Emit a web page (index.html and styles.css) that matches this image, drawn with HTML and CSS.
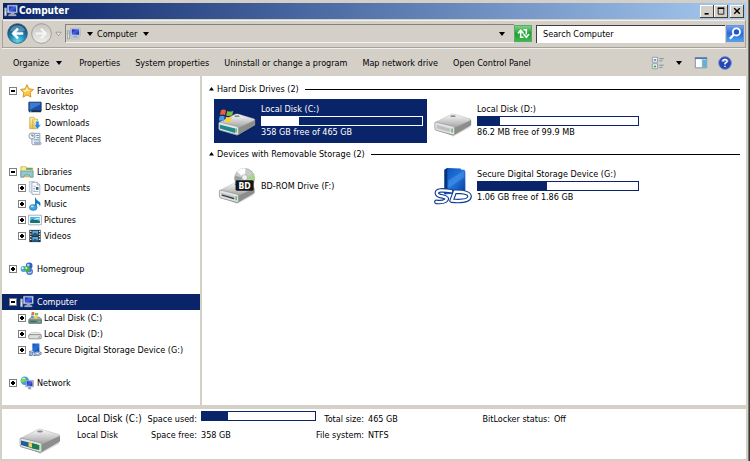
FILE: index.html
```html
<!DOCTYPE html>
<html lang="en">
<head>
<meta charset="utf-8">
<title>Computer</title>
<link rel="stylesheet" href="styles.css">
</head>
<body>
<svg class="defs" aria-hidden="true">
  <defs>
    <linearGradient id="g-metal" x1="0" y1="0" x2="0" y2="1"><stop offset="0" stop-color="#fafafa"/><stop offset="1" stop-color="#a2a4a2"/></linearGradient>
    <linearGradient id="g-screen" x1="0" y1="0" x2="1" y2="1"><stop offset="0" stop-color="#0c18b0"/><stop offset=".5" stop-color="#4464e8"/><stop offset="1" stop-color="#0a1890"/></linearGradient>
    <linearGradient id="g-blue" x1="0" y1="0" x2="1" y2="1"><stop offset="0" stop-color="#0a4fb4"/><stop offset=".5" stop-color="#2474dc"/><stop offset="1" stop-color="#063a96"/></linearGradient>
    <radialGradient id="g-back" cx=".5" cy=".9" r=".9"><stop offset="0" stop-color="#5fdcf4"/><stop offset=".5" stop-color="#1c7fae"/><stop offset="1" stop-color="#0c3f6c"/></radialGradient>
    <linearGradient id="g-fwd" x1="0" y1="0" x2="0" y2="1"><stop offset="0" stop-color="#c6c5c2"/><stop offset="1" stop-color="#eeeeec"/></linearGradient>
    <linearGradient id="g-folder" x1="0" y1="0" x2="0" y2="1"><stop offset="0" stop-color="#fdf3b0"/><stop offset="1" stop-color="#e8c24c"/></linearGradient>
    <symbol id="i-computer" viewBox="0 0 16 16">
      <path d="M.5 4.500h2.500v9H.5z" fill="#d9e2ee" stroke="#7f8da2" stroke-width=".8"/>
      <path d="M1.200 7h1" stroke="#56b85a"/>
      <path d="M4 1.500h11v8.500H4z" fill="#e9edf4" stroke="#98a4b8" stroke-width=".8"/>
      <path d="M5.300 2.600h8.600v6.200H5.300z" fill="url(#g-screen)"/>
      <path d="M8 10h3.500l.5 2H7z" fill="#9eaabe"/><path d="M5.500 12h8l.5 1.500H5z" fill="#dde3ed" stroke="#8c98ac" stroke-width=".5"/>
    </symbol>
    <symbol id="i-drive" viewBox="0 0 44 26">
      <path d="M3 14 22 25l19-12v3L22 26 4 17z" fill="#000" opacity=".12"/>
      <path d="M2 11 20 2q2-.8 4 0l17 5q1 .5 1 1.500v5L24 24q-1.500 1-3 .6L3 19q-1-.5-1-1.500z" fill="#8c8e8c"/>
      <path d="M2 10.500 20 1.500q2-.8 4 0l17 5q1 .8-.3 1.800L23.500 16z" fill="url(#g-metal)" stroke="#b8bab8" stroke-width=".5"/>
      <path d="M2 11q0-1 2-.8l18 4.500q1.700.5 1.700 2v6q0 1.800-2 1.300L3.500 19Q2 18.500 2 17z" fill="#e2e3e4" stroke="#85878a" stroke-width=".6"/>
      <path d="m4 13 15 4v4L4 17z" fill="#bcbfc4"/>
      <path d="M21 17v4.500" stroke="#42a832" stroke-width="1.300"/>
      <ellipse cx="22" cy="3.500" rx="3" ry="1" fill="#8a8c8a"/>
    </symbol>
    <symbol id="i-flag" viewBox="0 0 16 16">
      <path d="M2 2.500q3-1.500 5 .3L6 7.500q-2.200-1.500-5-.2z" fill="#f0602a"/>
      <path d="M8.200 3.200q2.500 1.500 6-.2l-1 4.600q-3 1.400-6 .2z" fill="#7cc040"/>
      <path d="M.8 8.500q2.700-1.200 5 .2L4.700 13.300Q2.500 12-.2 13z" fill="#4b9bea"/>
      <path d="M7 9q3 1.400 6 0l-1.200 4.600q-3 1.400-5.800.2z" fill="#fcd03a"/>
    </symbol>
    <symbol id="i-sd" viewBox="0 0 40 40">
      <path d="m11 3 3-2 14 .5 1 1.500h3l1 2V27l-22 2z" fill="url(#g-blue)"/>
      <path d="m11 3 3-2v26l-3 2z" fill="#06337e"/>
      <path d="m15 14 17-10v7L15 22z" fill="#6eb6ff" opacity=".3"/>
      <g fill="none" stroke-linecap="round" stroke-linejoin="round">
        <path d="M18 25.500Q3 23 3 27.300q0 2.700 6 3.700 7 1.500 3 4.500-3 2-9.500 1.200M22 26l-3.500 9.500Q37 37 37.500 31 37.500 26 22 26" stroke="#123f94" stroke-width="4.800"/>
        <path d="M18 25.500Q3 23 3 27.300q0 2.700 6 3.700 7 1.500 3 4.500-3 2-9.500 1.200M22 26l-3.500 9.500Q37 37 37.500 31 37.500 26 22 26" stroke="#fff" stroke-width="2.400"/>
      </g>
    </symbol>
    <symbol id="i-sdnav" viewBox="0 0 16 16">
      <path d="M5 .5h8V10.500L5 11z" fill="url(#g-blue)"/>
      <path d="M6.500 10Q1.500 9.300 2 11t3 1.300Q5.500 14 1 13.700M9 10.500l-1.500 3.300q6 .2 7-1.600T9 10.500" fill="none" stroke="#3c5c98" stroke-width="2"/>
      <path d="M6.500 10Q1.500 9.300 2 11t3 1.300Q5.500 14 1 13.700M9 10.500l-1.500 3.300q6 .2 7-1.600T9 10.500" fill="none" stroke="#e4ecf8" stroke-width=".9"/>
    </symbol>
  </defs>
</svg>

<div class="window">
  <header class="titlebar">
    <svg class="ico"><use href="#i-computer"/></svg>
    <h1 class="title">Computer</h1>
    <button class="winbtn" aria-label="Minimize"><svg viewBox="0 0 10 10"><path d="M2 8.500h5" stroke="#000" stroke-width="2"/></svg></button>
    <button class="winbtn" aria-label="Maximize"><svg viewBox="0 0 10 10"><path d="M1 1.500h8" stroke="#000" stroke-width="2"/><path d="M1.500 1v8h7V1" fill="none" stroke="#000"/></svg></button>
    <button class="winbtn close" aria-label="Close"><svg viewBox="0 0 10 10"><path d="m1.500 1.500 7 7m0-7-7 7" stroke="#000" stroke-width="1.800"/></svg></button>
  </header>

  <nav class="navbar">
    <button class="round" aria-label="Back"><svg viewBox="0 0 22 22"><circle cx="11" cy="11" r="10.300" fill="url(#g-back)" stroke="#35506a" stroke-width=".8"/><path d="M3 8a8.500 8.500 0 0 1 16 0q-8 3-16 0z" fill="#fff" opacity=".28"/><path d="M17 11H6.500m5-5-5 5 5 5" fill="none" stroke="#fff" stroke-width="2.600"/></svg></button>
    <button class="round" aria-label="Forward"><svg viewBox="0 0 22 22"><circle cx="11" cy="11" r="10.300" fill="url(#g-fwd)" stroke="#8f8e8a" stroke-width=".8"/><path d="M5 11h10.500m-5-5 5 5-5 5" fill="none" stroke="#f6f6f4" stroke-width="2.200"/></svg></button>
    <button class="recent" aria-label="Recent pages"><svg viewBox="0 0 8 6"><path d="M1 1h6L4 4.800z" fill="#f4f4f2" stroke="#85837c" stroke-width=".8"/></svg></button>
    <div class="address">
      <svg class="ico"><use href="#i-computer"/></svg>
      <button class="caret" aria-label="Root locations"><svg viewBox="0 0 6 4"><path d="M0 0h6L3 4z"/></svg></button>
      <a class="crumb" href="#computer">Computer</a>
      <button class="caret" aria-label="Computer locations"><svg viewBox="0 0 6 4"><path d="M0 0h6L3 4z"/></svg></button>
      <button class="caret history" aria-label="Previous locations"><svg viewBox="0 0 6 4"><path d="M0 0h6L3 4z"/></svg></button>
    </div>
    <button class="refresh" aria-label="Refresh"><svg viewBox="0 0 16 16"><path d="M8 12H5V6.500M2 8l3-3.500L8 8M8 4h3v5M8 8.500l3 3.500 3-3.500" fill="none" stroke="#fff" stroke-width="1.700"/></svg></button>
    <input class="search" type="text" value="Search Computer" aria-label="Search Computer">
    <button class="go" aria-label="Search"><svg viewBox="0 0 16 16"><circle cx="9" cy="6.300" r="3.800" fill="#2455c4" stroke="#fff" stroke-width="2"/><path d="m6 9.300-4 4.200" stroke="#fff" stroke-width="2.400"/></svg></button>
  </nav>

  <div class="toolbar">
    <button class="tool organize">Organize <svg class="drop" viewBox="0 0 6 4"><path d="M0 0h6L3 4z"/></svg></button>
    <button class="tool">Properties</button>
    <button class="tool">System properties</button>
    <button class="tool">Uninstall or change a program</button>
    <button class="tool">Map network drive</button>
    <button class="tool">Open Control Panel</button>
    <div class="views">
      <button class="tool" aria-label="Change view"><svg class="ico" viewBox="0 0 16 16"><path d="M1.500 1.500h6v5.500h-6zM1.500 9h6v5.500h-6z" fill="#fff" stroke="#8795a8"/><path d="M3 4.500h3" stroke="#3264b8" stroke-width="1.500"/><path d="M3 12h3" stroke="#3c9a3c" stroke-width="2"/><path d="M9.500 3h5M9.500 5.500h3.500M9.500 10.500h5M9.500 13h3.500" stroke="#7b8694"/></svg></button>
      <button class="tool" aria-label="More view options"><svg class="drop" viewBox="0 0 6 4"><path d="M0 0h6L3 4z"/></svg></button>
      <button class="tool pane" aria-label="Show the preview pane"><svg class="ico" viewBox="0 0 16 16"><path d="M1.500 2.500h13v11h-13z" fill="#fff" stroke="#6f86a6"/><path d="M1 2.500h14" stroke="#4478b8" stroke-width="2"/><path d="M10 4h4v9h-4z" fill="#58b4dc"/><path d="M9.500 3v10" stroke="#7e9cbc"/></svg></button>
      <button class="tool" aria-label="Get help"><svg class="ico" viewBox="0 0 16 16"><circle cx="8" cy="8" r="7.300" fill="#2446b4" stroke="#7f95cc"/><path d="M3 6a5.500 5.500 0 0 1 10 0q-5 2-10 0z" fill="#fff" opacity=".3"/><path d="M5.500 6.200Q5.700 4 8 4t2.500 2Q10.500 7.300 8 8.500v1.200M8 11v1.700" fill="none" stroke="#fff" stroke-width="1.700"/></svg></button>
    </div>
  </div>

  <div class="body">
    <aside class="tree">
      <ul class="group">
        <li class="node"><button class="toggle open" aria-label="Collapse Favorites"></button><svg class="ico" viewBox="0 0 16 16"><path d="m8 .8 2.200 4.700 5.200.7-3.800 3.600.9 5.200L8 12.500 3.500 15l.9-5.200L.6 6.200l5.200-.7z" fill="#fcc84a" stroke="#d68a1c"/><path d="m8 3 1.300 3.500 3 .4L5 9.500 3.500 7l3-.5z" fill="#fff0a8"/></svg><a href="#favorites">Favorites</a></li>
        <li class="node leaf"><svg class="ico" viewBox="0 0 16 16"><path d="M1 2.500h14v10H1z" fill="#1d4fa4" stroke="#0e2e6c"/><path d="M2 3h12v2L2 11z" fill="#3c7ccc"/><path d="M1 13h14" stroke="#182e50" stroke-width="2"/><path d="M2 12.800h2" stroke="#6cc2f2"/></svg><a href="#desktop">Desktop</a></li>
        <li class="node leaf"><svg class="ico" viewBox="0 0 16 16"><path d="M2 1.500h5v2h4v11H2z" fill="url(#g-folder)" stroke="#c79d34" stroke-width=".8"/><path d="M5.500 3.500v11" stroke="#cfa640"/><path d="M9 6h3.500v4h2.300L10.800 15 7 10h2z" fill="#2388dc" stroke="#e2f2ff" stroke-width=".6"/></svg><a href="#downloads">Downloads</a></li>
        <li class="node leaf"><svg class="ico" viewBox="0 0 16 16"><path d="M4.500 1.500h9V12q1.500 0 1.500 1t-1.500 1.500H6q-1.500 0-1.500-1.500z" fill="#edf4fb" stroke="#8292a8"/><path d="M7 11h7v3H7z" fill="#9db5ce"/><circle cx="4.500" cy="4.500" r="3.500" fill="#eef5fb" stroke="#8794a5"/><path d="M4.500 2.500v2h2" stroke="#31598e" fill="none"/><path d="M9.500 4h3M9.500 6.500h3M6.500 9h6" stroke="#5882b4"/></svg><a href="#recent">Recent Places</a></li>
      </ul>
      <ul class="group">
        <li class="node"><button class="toggle open" aria-label="Collapse Libraries"></button><svg class="ico" viewBox="0 0 16 16"><path d="M1 2h6l1 1.500h6.500v10H1z" fill="url(#g-folder)" stroke="#c29a38" stroke-width=".8"/><path d="M7 4.500h7" stroke="#59a86c" stroke-width="2"/><path d="M1 7h14v7h-3q-.3-3-4-3t-4 3H1z" fill="#8ec9d8" stroke="#4d96ab" stroke-width=".8"/></svg><a href="#libraries">Libraries</a></li>
        <li class="node sub"><button class="toggle" aria-label="Expand Documents"></button><svg class="ico" viewBox="0 0 16 16"><path d="M1.500.7h6v12h-6z" fill="#e7edf5" stroke="#a2adbb" stroke-width=".7"/><path d="M4.500 1.500h6l3 3v10.800h-9z" fill="#fff" stroke="#8290a4" stroke-width=".8"/><path d="M10.500 1.500v3h3" fill="none" stroke="#8290a4" stroke-width=".8"/><path d="M6 6h3M6 12h6" stroke="#9db1ca"/><path d="M9 7h3v3H9z" fill="#2b538e"/><path d="M6 8.500h2M6 10.500h2" stroke="#96aac6"/></svg><a href="#documents">Documents</a></li>
        <li class="node sub"><button class="toggle" aria-label="Expand Music"></button><svg class="ico" viewBox="0 0 16 16"><path d="M8 0q1.500 3.500 4.500 5t1 6.500q.5-3-3.500-4.500V12H8z" fill="#1978bd"/><ellipse cx="6" cy="12" rx="4.500" ry="3.300" fill="#3ea3df" stroke="#1767a4" stroke-width=".6"/><ellipse cx="4.800" cy="10.800" rx="1.800" ry="1" fill="#b5e2fa"/></svg><a href="#music">Music</a></li>
        <li class="node sub"><button class="toggle" aria-label="Expand Pictures"></button><svg class="ico" viewBox="0 0 16 16"><path d="M.7 2.500h14.600v11H.7z" fill="#fff" stroke="#8093a6" stroke-width=".8"/><path d="M2.500 4.500h11v7h-11z" fill="#4fb2e6"/><path d="M2.500 8.500q4-3 11 1v2h-11z" fill="#18736f"/><path d="M7 7q3-2 6.500-1v1.500Q10 6.500 7 8z" fill="#d4f2fb"/></svg><a href="#pictures">Pictures</a></li>
        <li class="node sub"><button class="toggle" aria-label="Expand Videos"></button><svg class="ico" viewBox="0 0 16 16"><path d="M1.500 1h13v14h-13z" fill="#26343f"/><path d="M5 2h6.500v5H5zM5 9h6.500v5H5z" fill="#5ca8d6"/><path d="m5 6 3-2 3.500 2v1H5zM5 13l3-2 3.500 2v1H5z" fill="#1c5a8c"/><path d="M3.200 2v12M13.200 2v12" stroke="#e5eef5" stroke-width="1.500" stroke-dasharray="1.500 1.500"/></svg><a href="#videos">Videos</a></li>
      </ul>
      <ul class="group">
        <li class="node"><button class="toggle" aria-label="Expand Homegroup"></button><svg class="ico" viewBox="0 0 16 16"><circle cx="4" cy="8" r="3.300" fill="#4aa6e2"/><circle cx="10.500" cy="4.500" r="3.800" fill="#2c64c4"/><circle cx="11" cy="11" r="3.800" fill="#4b7ed4"/><circle cx="8" cy="8" r="3.300" fill="#4cae48"/><circle cx="9.500" cy="3.500" r="1.500" fill="#bcd9fa"/><circle cx="3" cy="7" r="1.200" fill="#def2fd"/><circle cx="7.200" cy="7" r="1.300" fill="#c4f2b6"/><path d="M9 12q2.500 1.500 4.500-1" stroke="#e6f0ff" fill="none"/></svg><a href="#homegroup">Homegroup</a></li>
      </ul>
      <ul class="group">
        <li class="node selected"><button class="toggle open" aria-label="Collapse Computer"></button><svg class="ico"><use href="#i-computer"/></svg><a href="#computer">Computer</a></li>
        <li class="node sub"><button class="toggle" aria-label="Expand Local Disk (C:)"></button><svg class="ico" viewBox="0 0 16 16"><path d="m1 9.500 3-2.500h9l2.500 2.500v4.500H1z" fill="#a9b3ac" stroke="#5e6a66" stroke-width=".7"/><path d="M1 10h14.300v4H1z" fill="#75908c" stroke="#54605f" stroke-width=".5"/><path d="M2.500 12h7" stroke="#2d6d68" stroke-width="1.500"/><path d="M12 12h2" stroke="#6ae04f"/><svg x="3" y="0" width="10" height="10"><use href="#i-flag"/></svg></svg><a href="#disk-c">Local Disk (C:)</a></li>
        <li class="node sub"><button class="toggle" aria-label="Expand Local Disk (D:)"></button><svg class="ico" viewBox="0 0 16 16"><path d="m1 9 3-2.500h8.500L15.300 9z" fill="#f4f4f4" stroke="#a4a4a4" stroke-width=".7"/><rect x=".7" y="8.700" width="14.600" height="4.800" rx="1.500" fill="#dcdddd" stroke="#737678" stroke-width=".8"/><path d="M12 11.500h2" stroke="#43ab38"/></svg><a href="#disk-d">Local Disk (D:)</a></li>
        <li class="node sub"><button class="toggle" aria-label="Expand Secure Digital Storage Device (G:)"></button><svg class="ico"><use href="#i-sdnav"/></svg><a href="#disk-g">Secure Digital Storage Device (G:)</a></li>
      </ul>
      <ul class="group">
        <li class="node"><button class="toggle" aria-label="Expand Network"></button><svg class="ico" viewBox="0 0 16 16"><circle cx="5.500" cy="5.500" r="4.800" fill="#35a5d4"/><path d="M3 1.500q3 0 4 2T4 7 1 5.500Q1 3 3 1.500z" fill="#7ad45e"/><path d="M3 3q2-1 3 0" stroke="#e9fbff" fill="none"/><path d="M6.500 5h8.800v7.300H6.500z" fill="#e4eaf4" stroke="#71829f" stroke-width=".7"/><path d="M7.500 6h6.800v5.300H7.500z" fill="url(#g-screen)"/><path d="M9.500 12.500h3l.5 2.500H9z" fill="#92a3bd"/></svg><a href="#network">Network</a></li>
      </ul>
    </aside>

    <main class="content">
      <section>
        <h2 class="heading"><svg viewBox="0 0 6 4"><path d="M0 3.500h5L2.500 0z"/></svg>Hard Disk Drives (2)</h2>
        <div class="tiles">
          <article class="tile selected">
            <svg class="device" viewBox="0 0 42 38"><svg x="0" y="10" width="42" height="26"><use href="#i-drive"/><path d="m3 13 16 4v4.500L3 17z" fill="#1d8a8c"/></svg><svg x="2" y="5" width="17" height="17"><use href="#i-flag"/></svg></svg>
            <div class="info"><span>Local Disk (C:)</span><div class="meter"><div class="fill" style="width:23%"></div></div><span>358 GB free of 465 GB</span></div>
          </article>
          <article class="tile">
            <svg class="device" viewBox="0 0 42 38"><svg x="0" y="10" width="42" height="26"><use href="#i-drive"/></svg></svg>
            <div class="info"><span>Local Disk (D:)</span><div class="meter"><div class="fill" style="width:14%"></div></div><span>86.2 MB free of 99.9 MB</span></div>
          </article>
        </div>
      </section>
      <section>
        <h2 class="heading"><svg viewBox="0 0 6 4"><path d="M0 3.500h5L2.500 0z"/></svg>Devices with Removable Storage (2)</h2>
        <div class="tiles">
          <article class="tile">
            <svg class="device" viewBox="0 0 42 38"><svg x="0" y="14" width="42" height="24"><use href="#i-drive"/><path d="m5 14.500 13 3.800" stroke="#333" stroke-width="1.200"/></svg><circle cx="29" cy="11" r="10.500" fill="#c9cbca" stroke="#8d908f" stroke-width=".6"/><path d="M29 11 21 4q4-4 9-3.500z" fill="#fff"/><path d="m29 11 9-5q2 3 1.300 7z" fill="#a7d58a"/><path d="m29 11-10-3q-1 3 0 6z" fill="#9b9fa0"/><circle cx="29" cy="10" r="3" fill="#f1f2f1" stroke="#8e9190" stroke-width=".6"/><rect x="19.500" y="13" width="19" height="11" rx="1.500" fill="#151515"/><text class="badge" x="29" y="21.800" text-anchor="middle">BD</text></svg>
            <div class="info"><span>BD-ROM Drive (F:)</span></div>
          </article>
          <article class="tile">
            <svg class="device" viewBox="0 0 40 40"><use href="#i-sd"/></svg>
            <div class="info"><span>Secure Digital Storage Device (G:)</span><div class="meter"><div class="fill" style="width:43%"></div></div><span>1.06 GB free of 1.86 GB</span></div>
          </article>
        </div>
      </section>
    </main>
  </div>

  <footer class="details">
    <svg class="preview" viewBox="0 0 44 26"><use href="#i-drive"/><path d="m3 12.500 16 4v5L3 17z" fill="#1c5f96"/><path d="m13 15 8 2v5l-8-2z" fill="#1f7a4e"/><path d="m10.500 14.500 3.500 1v4l-3.500-1z" fill="#e8d84c"/><path d="M22 17v5" stroke="#8ff07c"/></svg>
    <div class="names"><strong>Local Disk (C:)</strong><span>Local Disk</span></div>
    <dl class="facts">
      <dt>Space used:</dt><dd><div class="meter"><div class="fill" style="width:23%"></div></div></dd>
      <dt>Space free:</dt><dd>358 GB</dd>
    </dl>
    <dl class="facts">
      <dt>Total size:</dt><dd>465 GB</dd>
      <dt>File system:</dt><dd>NTFS</dd>
    </dl>
    <dl class="facts last">
      <dt>BitLocker status:</dt><dd>Off</dd>
    </dl>
  </footer>
</div>
</body>
</html>
```
FILE: styles.css
```css
* { box-sizing: border-box; }

body {
  margin: 0;
  background: #3c3836;
  color: #000;
  font: 9px/16px "DejaVu Sans Condensed", "DejaVu Sans", sans-serif;
}

button {
  display: flex;
  align-items: center;
  padding: 0;
  border: 0;
  background: none;
  color: inherit;
  font: inherit;
  white-space: nowrap;
}

a { color: inherit; text-decoration: none; white-space: nowrap; }
ul, dl, dd { margin: 0; padding: 0; list-style: none; }
svg { display: block; flex: none; }
.defs { position: absolute; width: 0; height: 0; }
.ico { width: 14px; height: 14px; }

.window {
  display: flex;
  flex-direction: column;
  min-height: 100vh;
  margin-right: 1px;
  padding: 3px 2px 2px;
  border-right: 1px solid #777470;
  background: #d4d0c8;
}

.titlebar {
  display: flex;
  align-items: center;
  height: 16px;
  margin-left: 1px;
  padding: 0 2px 0 1px;
  background: linear-gradient(90deg, #0a246a, #a6caf0);
  color: #fff;
}
.title {
  flex: 1;
  margin: 0 0 0 1px;
  font-size: 10px;
  line-height: 16px;
}
.winbtn {
  justify-content: center;
  width: 14px;
  height: 13px;
  background: #d4d0c8;
  box-shadow: inset -1px -1px #404040, inset 1px 1px #fff;
}
.winbtn svg { width: 8px; height: 8px; }
.close { margin-left: 2px; }

.navbar {
  display: flex;
  align-items: center;
  height: 28px;
  margin-top: 1px;
  padding: 0 1px 0 4px;
  border: solid #a5a29b;
  border-width: 0 1px 1px;
  box-shadow: inset 0 1px #f2f0ec;
}
.round { margin-right: 3px; }
.round svg { width: 21px; height: 21px; }
.recent svg { width: 7px; height: 6px; }
.recent { margin-right: 3px; }
.address {
  display: flex;
  flex: 1;
  align-items: center;
  height: 19px;
  padding: 0 9px 0 1px;
  border: 1px solid #85827b;
  border-right: 0;
  border-bottom-color: #f4f2ee;
}
.caret svg { width: 6px; height: 4px; }
.caret { margin: 0 4px 0 6px; }
.history { margin: 0 0 0 auto; }
.refresh, .go {
  justify-content: center;
  width: 18px;
  height: 17px;
  border: 1px solid #5ea86a;
  background: linear-gradient(#7cd288, #1ba02f 50%, #35bc48);
}
.refresh svg, .go svg { width: 15px; height: 15px; }
.go {
  border-color: #6a94d4;
  background: linear-gradient(#6fa4ee, #2a66d8 50%, #48a4f4);
}
.search {
  width: 189px;
  height: 18px;
  margin: 0 1px 0 4px;
  padding: 0 6px;
  border: solid;
  border-width: 1px 0 0 1px;
  border-color: #404040;
  background: #fff;
  color: #000;
  font: inherit;
}

.toolbar {
  display: flex;
  align-items: center;
  gap: 15px;
  height: 28px;
  padding: 0 14px 0 11px;
  border-top: 1px solid #f2f0ec;
}
.drop { width: 6px; height: 4px; margin-left: 7px; }
.organize { margin-right: 2px; }
.views { display: flex; margin-left: auto; }
.views .drop { margin-left: 11px; }
.pane { margin: 0 10px 0 12px; }

.body { display: flex; flex: 1; }
.tree {
  width: 200px;
  flex: none;
  padding-top: 7px;
  border-right: 2px solid #d4d0c8;
  background: #fff;
}
.group + .group { margin-top: 17px; }
.node {
  display: flex;
  align-items: center;
  gap: 3px;
  height: 16px;
  padding-left: 7px;
}
.sub { gap: 2px; padding-left: 16px; }
.leaf { padding-left: 26px; }
.toggle {
  width: 8px;
  height: 8px;
  border: 1px solid #808080;
  background:
    linear-gradient(#000, #000) center / 4px 2px no-repeat,
    linear-gradient(#000, #000) center / 2px 4px no-repeat,
    #fff;
}
.open { background: linear-gradient(#000, #000) center / 4px 2px no-repeat, #fff; }
.selected { background: #0a246a; color: #fff; }

.content {
  flex: 1;
  padding: 4px 6px 0 7px;
  background: #fff;
}
.heading {
  display: flex;
  align-items: center;
  height: 18px;
  margin: 0;
  font-size: 9px;
  font-weight: 400;
}
.heading svg { width: 6px; height: 4px; margin-right: 2px; }
.heading::after {
  content: "";
  flex: 1;
  height: 1px;
  margin-left: 6px;
  background: #000;
}
.tiles {
  display: grid;
  grid-template-columns: repeat(auto-fill, 213px);
  gap: 3px;
  padding: 1px 0 2px 5px;
}
.tile {
  display: flex;
  align-items: center;
  gap: 4px;
  height: 44px;
  padding: 0 4px 0 3px;
}
.device { width: 40px; height: 38px; }
.info { flex: 1; line-height: 13px; white-space: nowrap; }
.badge { fill: #fff; font-size: 9px; font-weight: 700; }
.meter {
  height: 10px;
  border: 1px solid #0a246a;
  background: #fff;
}
.fill { height: 100%; background: #0a246a; }
.selected .meter { border-color: #fff; background: #0a246a; }
.selected .fill { background: #fff; }

.details {
  display: flex;
  height: 54px;
  padding: 2px 15px 0;
  border-top: 4px solid #d4d0c8;
  background: #fff;
}
.preview { width: 46px; height: 26px; margin-top: 17px; }
.names { display: flex; flex-direction: column; width: 68px; margin-left: 14px; white-space: nowrap; }
.names strong { font-size: 10px; font-weight: 400; }
.facts {
  display: grid;
  grid-template-columns: 52px 115px;
  grid-auto-rows: 16px;
  column-gap: 4px;
}
.facts dt { text-align: right; white-space: nowrap; }
.facts + .facts { grid-template-columns: 48px 90px; }
.facts + .last { grid-template-columns: 92px 40px; }
```
